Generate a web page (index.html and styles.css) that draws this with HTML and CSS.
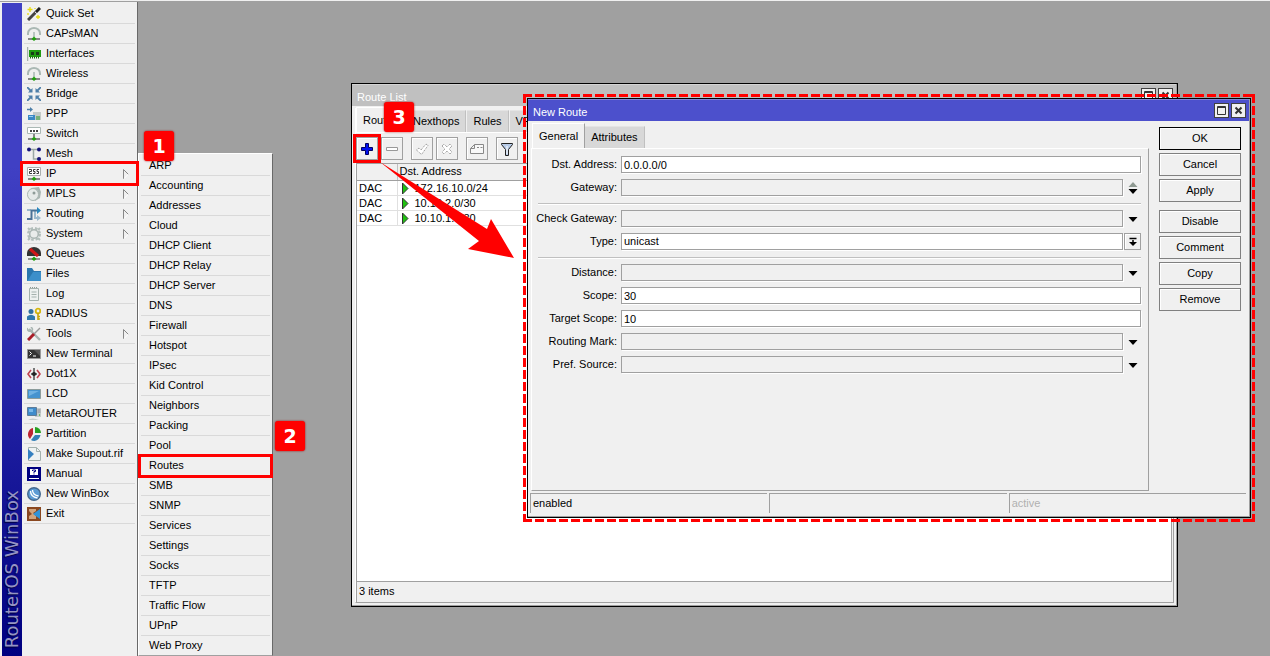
FILE: index.html
```html
<!DOCTYPE html>
<html lang="en">
<head>
<meta charset="utf-8">
<title>RouterOS WinBox</title>
<link rel="stylesheet" href="styles.css">
</head>
<body>
<div class="app">
  <div class="rail"><span class="rail-name">RouterOS WinBox</span></div>

  <nav class="menu" aria-label="Main menu">
    <button class="item"><svg class="icon" viewBox="0 0 14 14"><path d="M1 13 9 5" stroke="#444" stroke-width="3"/><path d="M9 5l4-4" stroke="#222" stroke-width="3"/><path d="M8 5l2 2" stroke="#ddd"/><path d="M3 0v5M.5 2.500h5M8 1v1M11 8v4M9 10h4M1 6v2" stroke="#e8dc10" stroke-width="1.300"/></svg>Quick Set</button>
    <button class="item"><svg class="icon" viewBox="0 0 14 14"><path d="M1 8V6.500a6 5.500 0 0 1 12 0V8" fill="none" stroke="#aab8b4" stroke-width="2"/><path d="M7 5v5" stroke="#aab8b4" stroke-width="1.500"/><path d="M1 12h12" stroke="#666" stroke-width="1.500"/><path d="M7 9.500 9.500 12 7 14l-2.500-2z" fill="#22a010"/></svg>CAPsMAN</button>
    <button class="item"><svg class="icon" viewBox="0 0 14 14"><path d="M.5 0v14" stroke="#a5b0ac" stroke-width="1.500"/><path d="M2 3h12v7H2z" fill="#1f9a10"/><path d="M4 5h3v3H4zM9 5h3v3H9z" fill="#173c17"/><path d="M3 10.500h10" stroke="#166c0c" stroke-dasharray="1 1" stroke-width="2"/></svg>Interfaces</button>
    <button class="item"><svg class="icon" viewBox="0 0 14 14"><path d="M1 8V6.500a6 5.500 0 0 1 12 0V8" fill="none" stroke="#aab8b4" stroke-width="2"/><path d="M7 5v5" stroke="#aab8b4" stroke-width="1.500"/><path d="M1 12h12" stroke="#666" stroke-width="1.500"/><path d="M7 9.500 9.500 12 7 14l-2.500-2z" fill="#22a010"/></svg>Wireless</button>
    <button class="item"><svg class="icon" viewBox="0 0 14 14"><path d="M0 0l4 4M14 0l-4 4M0 14l4-4M14 14l-4-4" stroke="#4e7fa8" stroke-width="1.800"/><path d="M5.500 1v4.500H1zM8.500 1v4.500H13zM5.500 13V8.500H1zM8.500 13V8.500H13z" fill="#4e7fa8"/></svg>Bridge</button>
    <button class="item"><svg class="icon" viewBox="0 0 14 14"><path d="M0 2.500h4" stroke="#4e7fa8" stroke-width="1.500"/><path d="M3 0l3 2.500L3 5z" fill="#4e7fa8"/><path d="M6 5h8v8H8V8H6z" fill="#c3cac8"/><path d="M1 8h7v5H1z" fill="#3c88c4"/><path d="M2 9.500h4" stroke="#9bd0f4"/><path d="M9 10h4M9 12h4" stroke="#29982a" stroke-width="1.200"/></svg>PPP</button>
    <button class="item"><svg class="icon" viewBox="0 0 14 14"><path d="M.5.500h13v6H.5z" fill="#fff" stroke="#aab8b4"/><path d="M3 3h2v2H3zM6 3h2v2H6zM9 3h2v2H9z" fill="#444"/><path d="M7 7v3" stroke="#888" stroke-width="2"/><path d="M1 12h12" stroke="#666" stroke-width="1.500"/><path d="M7 9.500 9.500 12 7 14l-2.500-2z" fill="#22a010"/></svg>Switch</button>
    <button class="item"><svg class="icon" viewBox="0 0 14 14"><path d="M2 2.500h9M6.500 2.500V12H11" fill="none" stroke="#9aa8a4" stroke-width="1.500"/><circle cx="2" cy="2.500" r="2" fill="#15157a"/><circle cx="12" cy="2.500" r="2" fill="#15157a"/><circle cx="12" cy="12" r="2" fill="#15157a"/></svg>Mesh</button>
    <button class="item"><svg class="icon" viewBox="0 0 14 14"><path d="M.5.500h13v8H.5z" fill="#fff" stroke="#aab0ae"/><path d="M2 2.500h2.500v2h-2v2H5M8.500 2.500H6.500v2h1.500v2H6M12 2.500h-2v2h1.500v2H9.500" fill="none" stroke="#222" stroke-width=".9"/><path d="M1 12h12" stroke="#666" stroke-width="1.500"/><path d="M7 9.500 9.500 12 7 14l-2.500-2z" fill="#22a010"/></svg>IP<svg class="more" viewBox="0 0 6 10"><path d="M.5 10V.5L5.500 5.500" fill="none" stroke="#888"/><path d="M5.500 5 1 9.500" stroke="#fff"/></svg></button>
    <button class="item"><svg class="icon" viewBox="0 0 14 14"><path d="M4 1l8-1 2 5-1 6-5 3z" fill="#a9b6b2"/><ellipse cx="6" cy="7.500" rx="5.500" ry="6" fill="#e5eae8" stroke="#a9b6b2"/><circle cx="7" cy="6" r="1.500" fill="#8e9c98"/></svg>MPLS<svg class="more" viewBox="0 0 6 10"><path d="M.5 10V.5L5.500 5.500" fill="none" stroke="#888"/><path d="M5.500 5 1 9.500" stroke="#fff"/></svg></button>
    <button class="item"><svg class="icon" viewBox="0 0 14 14"><path d="M0 3h4M8 3v8h3" fill="none" stroke="#9ab8cc" stroke-width="2"/><path d="M0 12h4.500V3.500h6" fill="none" stroke="#4a7196" stroke-width="2"/><path d="M10 0l4 3.500L10 7z" fill="#2886bd"/><path d="M10 8l4 3-4 3z" fill="#9ab8cc"/></svg>Routing<svg class="more" viewBox="0 0 6 10"><path d="M.5 10V.5L5.500 5.500" fill="none" stroke="#888"/><path d="M5.500 5 1 9.500" stroke="#fff"/></svg></button>
    <button class="item"><svg class="icon" viewBox="0 0 14 14"><circle cx="7" cy="7" r="5.800" fill="none" stroke="#b2bebb" stroke-width="2.400" stroke-dasharray="2.600 2"/><circle cx="7" cy="7" r="4.300" fill="#e9eceb" stroke="#a9b5b2" stroke-width="1.500"/><path d="M1 1l2 2M13 1l-2 2M1 13l2-2M13 13l-2-2" stroke="#b2bebb" stroke-width="2"/></svg>System<svg class="more" viewBox="0 0 6 10"><path d="M.5 10V.5L5.500 5.500" fill="none" stroke="#888"/><path d="M5.500 5 1 9.500" stroke="#fff"/></svg></button>
    <button class="item"><svg class="icon" viewBox="0 0 14 14"><path d="M0 9V6a7 6 0 0 1 14 0v3z" fill="#333"/><path d="M3 2l8 7" stroke="#d01818" stroke-width="3"/><path d="M1 12h12" stroke="#777" stroke-width="1.500"/><path d="M7 9.500 9.500 12 7 14l-2.500-2z" fill="#22a010"/></svg>Queues</button>
    <button class="item"><svg class="icon" viewBox="0 0 14 14"><path d="M0 1h5l2 3h7v10H0z" fill="#2a76ae"/><path d="M1 13 6 5h8v9H0z" fill="#3c8fca"/></svg>Files</button>
    <button class="item"><svg class="icon" viewBox="0 0 14 14"><path d="M2.500 1.500h9v12h-9z" fill="#edf1f0" stroke="#a4b1ad"/><path d="M4.500 5h5M4.500 7.500h5M4.500 10h5" stroke="#a4b1ad" stroke-width="1.200"/><path d="M3 .500h8" stroke="#8f9c98" stroke-dasharray="1 1"/></svg>Log</button>
    <button class="item"><svg class="icon" viewBox="0 0 14 14"><circle cx="4" cy="4.500" r="2.500" fill="#2f6f9f"/><path d="M0 13V9.500Q4 6 8 9.500V13z" fill="#2f78ad"/><circle cx="11" cy="4" r="2.300" fill="none" stroke="#d5b60e" stroke-width="1.800"/><path d="M11 6v7M11 9.500h2M11 12h2" stroke="#c4a50c" stroke-width="1.600"/></svg>RADIUS</button>
    <button class="item"><svg class="icon" viewBox="0 0 14 14"><path d="M2 2l11 11" stroke="#a9b5b2" stroke-width="2.400"/><path d="M0 1q1 4 4 3T4 0" fill="none" stroke="#a9b5b2" stroke-width="1.600"/><path d="M13 1 7 7" stroke="#999" stroke-width="1.500"/><path d="M7 7l-6 6" stroke="#a81c28" stroke-width="3"/></svg>Tools<svg class="more" viewBox="0 0 6 10"><path d="M.5 10V.5L5.500 5.500" fill="none" stroke="#888"/><path d="M5.500 5 1 9.500" stroke="#fff"/></svg></button>
    <button class="item"><svg class="icon" viewBox="0 0 14 14"><path d="M.5 2.500h13v9H.5z" fill="#333" stroke="#999"/><path d="M2.500 4.500l2 2-2 2M6 9h3" fill="none" stroke="#fff"/><path d="M13 3v6L7 3z" fill="#555"/></svg>New Terminal</button>
    <button class="item"><svg class="icon" viewBox="0 0 14 14"><path d="M4 3 1 7l3 4M10 3l3 4-3 4" fill="none" stroke="#c04450" stroke-width="1.600"/><path d="M7 1v12M4 7h6" stroke="#444" stroke-width="1.400"/><circle cx="7" cy="7" r="2" fill="#222"/></svg>Dot1X</button>
    <button class="item"><svg class="icon" viewBox="0 0 14 14"><path d="M.5 2.500h13v9H.5z" fill="#4593cf" stroke="#8c9c9b"/><path d="M2 4h10L2 9z" fill="#6fb1e2"/></svg>LCD</button>
    <button class="item"><svg class="icon" viewBox="0 0 14 14"><path d="M8 1h6v9H8z" fill="#c4ccca"/><path d="M.5.500h9v8h-9z" fill="#3f8ccb" stroke="#5e7c98"/><path d="M2 2h4v3H2z" fill="#78b8e8"/><path d="M10.500 3h3M10.500 5h3" stroke="#889"/><path d="M1 13q4-3 11 0z" fill="#c4ccca"/><path d="M12 8h1" stroke="#22a010"/></svg>MetaROUTER</button>
    <button class="item"><svg class="icon" viewBox="0 0 14 14"><path d="M6 1v6l-3 5A6.500 6.500 0 0 1 6 1z" fill="#bd2432"/><path d="M8 0a6 6 0 0 1 6 6H8z" fill="#27a022"/><path d="M13.500 8q-1 5-6 6Q5 14 4 13l4-5z" fill="#3480b8"/></svg>Partition</button>
    <button class="item"><svg class="icon" viewBox="0 0 14 14"><path d="M1.500.500h8l4 4v9h-12z" fill="#eef2f2" stroke="#a4b1ad"/><path d="M9.500.500v4h4" fill="none" stroke="#a4b1ad"/><path d="M1 2l6 5-6 6z" fill="#3480c0"/></svg>Make Supout.rif</button>
    <button class="item"><svg class="icon" viewBox="0 0 14 14"><path d="M0 0h14v14H0z" fill="#000080"/><path d="M3 2h8v6H3z" fill="#fff"/><path d="M5.500 4V3h3v1.500H7V6M7 6.500v1" fill="none" stroke="#000080"/><path d="M2 11.500h10" stroke="#fff"/></svg>Manual</button>
    <button class="item"><svg class="icon" viewBox="0 0 14 14"><circle cx="7" cy="7" r="6.300" fill="#5c9bd4" stroke="#44698f" stroke-width="1.400"/><path d="M3.500 4q0 6 7 7M5.500 3q0 5 6 6" fill="none" stroke="#fff" stroke-width="1.300"/></svg>New WinBox</button>
    <button class="item"><svg class="icon" viewBox="0 0 14 14"><path d="M0 0h14v14H0z" fill="#8a4820"/><path d="M2 2h7v2l-3 2 3 3v3H2V9l3-2-3-3z" fill="#d2a47c"/><path d="M13 2v10L6 7z" fill="#3194d8"/></svg>Exit</button>
  </nav>

  <main class="desk">
    <section class="window route-list" aria-label="Route List">
      <header class="title muted">
        <h2>Route List</h2>
        <button class="win-btn" aria-label="Maximize"><svg viewBox="0 0 11 11"><path d="M1.500 1.500h8v8h-8zM1 2.500h9" fill="none" stroke="#333"/></svg></button>
        <button class="win-btn" aria-label="Close"><svg viewBox="0 0 11 11"><path d="M2.500 2.500l6 6M8.500 2.500l-6 6" stroke="#333" stroke-width="2"/></svg></button>
      </header>
      <div class="frame">
        <div class="tabs list-tabs">
          <button class="tab active">Routes</button><button class="tab">Nexthops</button><button class="tab">Rules</button><button class="tab">VRF</button>
        </div>
        <div class="toolbar">
          <button class="tool" aria-label="Add"><svg viewBox="0 0 14 14"><path d="M5.500 1.500h3v4h4v3h-4v4h-3v-4h-4v-3h4z" fill="#0010f0" stroke="#000060"/></svg></button>
          <button class="tool" aria-label="Remove"><svg viewBox="0 0 14 14"><path d="M1.500 5.500h11v3h-11z" fill="#fff" stroke="#999"/></svg></button>
          <button class="tool spaced" aria-label="Enable"><svg viewBox="0 0 14 14"><path d="M1.500 8 4 6l2 2 5-6 2 1.500-6.500 9z" fill="#fff" stroke="#888" stroke-dasharray="1 1"/></svg></button>
          <button class="tool" aria-label="Disable"><svg viewBox="0 0 14 14"><path d="M2 4l2-2 3 3 3-3 2 2-3 3 3 3-2 2-3-3-3 3-2-2 3-3z" fill="#fff" stroke="#888" stroke-dasharray="1 1"/></svg></button>
          <button class="tool spaced" aria-label="Comment"><svg viewBox="0 0 14 14"><path d="M4.500 2.500h9v9H.500v-5zM.500 6.500h4v-4" fill="#f8f8f8" stroke="#888"/><path d="M7 5.500h2M10.500 5.500h2" stroke="#888"/></svg></button>
          <button class="tool spaced" aria-label="Filter"><svg viewBox="0 0 14 14"><path d="M1.500 1.500h11v1l-4 5v6h-3v-6l-4-5z" fill="#b8cce8" stroke="#222"/><path d="M7 4v8" stroke="#fff"/></svg></button>
        </div>
        <div class="grid">
          <table>
            <thead><tr><th class="flag"></th><th>Dst. Address</th></tr></thead>
            <tbody>
              <tr><td>DAC</td><td><svg class="play" viewBox="0 0 7 11"><path d="M.5 0 6 5.500.500 11z" fill="#20c010" stroke="#333"/></svg>172.16.10.0/24</td></tr>
              <tr><td>DAC</td><td><svg class="play" viewBox="0 0 7 11"><path d="M.5 0 6 5.500.500 11z" fill="#20c010" stroke="#333"/></svg>10.10.2.0/30</td></tr>
              <tr><td>DAC</td><td><svg class="play" viewBox="0 0 7 11"><path d="M.5 0 6 5.500.500 11z" fill="#20c010" stroke="#333"/></svg>10.10.1.0/30</td></tr>
            </tbody>
          </table>
        </div>
        <footer class="count">3 items</footer>
      </div>
    </section>

    <section class="window new-route" aria-label="New Route">
      <header class="title">
        <h2>New Route</h2>
        <button class="win-btn" aria-label="Maximize"><svg viewBox="0 0 11 11"><path d="M1.500 1.500h8v8h-8zM1 2.500h9" fill="none" stroke="#333"/></svg></button>
        <button class="win-btn" aria-label="Close"><svg viewBox="0 0 11 11"><path d="M2.500 2.500l6 6M8.500 2.500l-6 6" stroke="#333" stroke-width="2"/></svg></button>
      </header>
      <div class="dialog">
        <div class="sheet">
          <div class="tabs">
            <button class="tab active">General</button><button class="tab">Attributes</button>
          </div>
          <form class="page">
            <div class="field"><label for="dst">Dst. Address:</label><input id="dst" value="0.0.0.0/0"></div>
            <div class="field"><label for="gw">Gateway:</label><input id="gw" class="off"><button type="button" class="drop" aria-label="Add or remove gateway"><svg viewBox="0 0 10 12"><path d="M5 0l4.500 5h-9z" fill="#8f9a92"/><path d="M.500 7h9L5 12z" fill="#000"/></svg></button></div>
            <hr>
            <div class="field"><label for="cg">Check Gateway:</label><input id="cg" class="off"><button type="button" class="drop" aria-label="Expand"><svg viewBox="0 0 10 12"><path d="M.500 4h9L5 9z" fill="#000"/></svg></button></div>
            <div class="field"><label for="type">Type:</label><select id="type"><option>unicast</option></select><button type="button" class="drop boxed" aria-label="Choose type"><svg viewBox="0 0 10 12"><path d="M1.500 2.500h7M5 4v3" stroke="#000" stroke-width="1.500"/><path d="M1 6h8l-4 4z" fill="#000"/></svg></button></div>
            <hr>
            <div class="field"><label for="dist">Distance:</label><input id="dist" class="off"><button type="button" class="drop" aria-label="Expand"><svg viewBox="0 0 10 12"><path d="M.500 4h9L5 9z" fill="#000"/></svg></button></div>
            <div class="field"><label for="scope">Scope:</label><input id="scope" value="30"></div>
            <div class="field"><label for="tscope">Target Scope:</label><input id="tscope" value="10"></div>
            <div class="field"><label for="mark">Routing Mark:</label><input id="mark" class="off"><button type="button" class="drop" aria-label="Expand"><svg viewBox="0 0 10 12"><path d="M.500 4h9L5 9z" fill="#000"/></svg></button></div>
            <div class="field"><label for="pref">Pref. Source:</label><input id="pref" class="off"><button type="button" class="drop" aria-label="Expand"><svg viewBox="0 0 10 12"><path d="M.500 4h9L5 9z" fill="#000"/></svg></button></div>
          </form>
        </div>
        <div class="actions">
          <button class="default">OK</button><button>Cancel</button><button>Apply</button>
          <button class="group">Disable</button><button>Comment</button><button>Copy</button><button>Remove</button>
        </div>
      </div>
      <footer class="status"><span>enabled</span><span></span><span class="dim">active</span></footer>
      <div class="dashes"></div>
    </section>
  </main>

  <nav class="submenu" aria-label="IP">
    <button class="item">ARP</button>
    <button class="item">Accounting</button>
    <button class="item">Addresses</button>
    <button class="item">Cloud</button>
    <button class="item">DHCP Client</button>
    <button class="item">DHCP Relay</button>
    <button class="item">DHCP Server</button>
    <button class="item">DNS</button>
    <button class="item">Firewall</button>
    <button class="item">Hotspot</button>
    <button class="item">IPsec</button>
    <button class="item">Kid Control</button>
    <button class="item">Neighbors</button>
    <button class="item">Packing</button>
    <button class="item">Pool</button>
    <button class="item">Routes</button>
    <button class="item">SMB</button>
    <button class="item">SNMP</button>
    <button class="item">Services</button>
    <button class="item">Settings</button>
    <button class="item">Socks</button>
    <button class="item">TFTP</button>
    <button class="item">Traffic Flow</button>
    <button class="item">UPnP</button>
    <button class="item">Web Proxy</button>
  </nav>

  <div class="ring ring-ip"></div>
  <div class="ring ring-routes"></div>
  <div class="ring ring-add"></div>
  <svg class="pointer" viewBox="0 0 134 97"><path d="M0 0 107 67l4-10 23 39-46-9 11-8z" fill="#f00"/></svg>
  <div class="badge badge-1">1</div>
  <div class="badge badge-2">2</div>
  <div class="badge badge-3">3</div>
</div>
</body>
</html>
```
FILE: styles.css
```css
* { box-sizing: border-box; }

body {
  margin: 0;
  font: 11px/15px "Liberation Sans", Arial, sans-serif;
  color: #000;
  background: #f0f0f0;
}

button, input, select {
  font: inherit;
  color: inherit;
  margin: 0;
  padding: 0;
  border: 0;
  border-radius: 0;
  background: none;
}

svg { display: block; }

.app {
  position: relative;
  display: flex;
  height: 100vh;
  overflow: hidden;
  padding-left: 2px;
  border-top: 1px solid #f0f0f0;
}

.app::before {
  content: "";
  position: absolute;
  inset: 0 0 auto;
  height: 1px;
  background: #a0a0a0;
}

/* left rail */
.rail {
  width: 20px;
  flex: none;
  margin-top: 2px;
  padding-bottom: 8px;
  display: flex;
  align-items: flex-end;
  background: linear-gradient(#4040c4, #4040c4 25%, #000080);
}

.rail-name {
  writing-mode: vertical-rl;
  transform: rotate(180deg);
  font: 18px/20px "DejaVu Sans", sans-serif;
  white-space: nowrap;
  color: #9494c4;
  text-shadow: -1px -1px 1px #00003c;
}

/* menus */
.menu {
  width: 116px;
  flex: none;
  padding: 3px 2px 0;
  border-right: 1px solid #696969;
}

.item {
  display: flex;
  align-items: center;
  gap: 5px;
  width: 100%;
  height: 20px;
  padding-left: 3px;
  border-bottom: 1px solid #d9d9d9;
  text-align: left;
  white-space: nowrap;
}

.icon { width: 14px; height: 14px; flex: none; }
.more { width: 6px; height: 10px; margin: 0 6px 0 auto; }

.submenu {
  position: absolute;
  left: 138px;
  top: 152px;
  width: 135px;
  padding: 2px 2px 0;
  background: #f0f0f0;
  border: 1px solid #fff;
  border-right: 1px solid #696969;
  border-bottom: 1px solid #a0a0a0;
}

.submenu .item { padding-left: 8px; }
.submenu .item:last-child { height: 19px; border-bottom: 0; }

/* desktop and windows */
.desk {
  flex: 1;
  position: relative;
  margin-top: 1px;
  background: #a0a0a0;
}

.window {
  position: absolute;
  display: flex;
  flex-direction: column;
  background: #f0f0f0;
  border: 1px solid #000;
  box-shadow: inset -1px -1px #a0a0a0;
}

.route-list { left: 213px; top: 81px; right: 92px; bottom: 49px; }
.new-route { left: 389px; top: 96px; right: 19px; bottom: 138px; }

.title {
  display: flex;
  align-items: center;
  gap: 2px;
  height: 22px;
  padding: 0 3px 0 5px;
  margin-right: 1px;
  color: #fff;
  background: #4c50cc;
  border-top: 1px solid #8484d8;
}

.title.muted { background: #c0c0c0; border-top-color: #d4d4d4; }
.title h2 { flex: 1; margin: 0; padding-top: 3px; font-size: inherit; font-weight: normal; }

.win-btn {
  width: 15px;
  height: 15px;
  padding: 1px;
  background: #f0f0f0;
  border: 1px solid #404040;
}

.win-btn svg { width: 11px; height: 11px; }

.tabs { display: flex; align-items: flex-end; height: 25px; }

.tab {
  height: 22px;
  padding: 0 6px;
  background: #d8d8d8;
  border-right: 1px solid #c0c0c0;
  border-top: 1px solid #e4e4e4;
}

.tab.active {
  height: 25px;
  padding: 0 6px;
  background: #f0f0f0;
  border: 1px solid #fff;
  border-right-color: #a0a0a0;
  border-bottom: 0;
}

/* route list */
.frame {
  flex: 1;
  display: flex;
  flex-direction: column;
  margin: 2px 3px 3px;
  padding: 0 1px 0 0;
  border-right: 1px solid #a0a0a0;
  border-bottom: 1px solid #a0a0a0;
  border-left: 1px solid #fff;
}

.list-tabs { height: 24px; gap: 1px; }
.list-tabs .tab.active { width: 50px; text-align: left; }

.toolbar {
  display: flex;
  gap: 3px;
  padding: 4px 0 3px;
  border-top: 1px solid #fff;
}

.tool {
  display: grid;
  place-items: center;
  width: 22px;
  height: 23px;
  border: 1px solid #a0a0a0;
  box-shadow: inset 1px 1px #fff;
}

.tool svg { width: 14px; height: 14px; }
.tool.spaced { margin-left: 5px; }

.grid {
  flex: 1;
  background: #fff;
  border: 1px solid #a0a0a0;
}

table { width: 100%; border-collapse: collapse; table-layout: fixed; }

th {
  height: 16px;
  padding: 0 2px;
  font-weight: normal;
  text-align: left;
  background: #f0f0f0;
  border-bottom: 1px solid #a0a0a0;
}

th.flag { width: 40px; border-right: 1px solid #c0c0c0; }

td {
  height: 15px;
  padding: 0 2px;
  line-height: 14px;
  border-bottom: 1px solid #e0e0e0;
}

td + td { border-left: 1px solid #e0e0e0; padding-left: 4px; }

.play { display: inline-block; width: 7px; height: 11px; margin-right: 6px; vertical-align: -2px; }

.count {
  height: 20px;
  padding: 2px 2px 0;
  border-left: 1px solid #a0a0a0;
}

/* new route dialog */
.dialog { flex: 1; display: flex; gap: 10px; padding: 2px 9px 0 3px; }
.sheet { flex: 1; display: flex; flex-direction: column; }
.sheet .tabs { padding-left: 1px; }

.page {
  flex: 1;
  padding: 7px 7px 0 6px;
  border: 1px solid #fff;
  border-right-color: #a0a0a0;
  border-bottom-color: #a0a0a0;
}

.field { display: flex; align-items: center; height: 17px; margin-bottom: 6px; }
.field label { display: flex; justify-content: flex-end; width: 79px; margin-right: 4px; white-space: nowrap; }

.field input, .field select {
  flex: 1;
  min-width: 0;
  height: 17px;
  padding: 0 2px;
  appearance: none;
  background: #fff;
  border: 1px solid #a0a0a0;
  box-shadow: 1px 1px #fff;
}

.field input.off { background: #f0f0f0; }

.drop {
  display: grid;
  place-items: center;
  width: 17px;
  height: 17px;
  margin-left: 1px;
}

.drop svg { width: 10px; height: 12px; }
.drop.boxed { border: 1px solid #a0a0a0; box-shadow: inset 1px 1px #fff; }

hr { height: 2px; margin: 7px 0 5px; border: 0; border-top: 1px solid #c0c0c0; border-bottom: 1px solid #fff; }

.actions { width: 82px; padding-top: 4px; display: flex; flex-direction: column; gap: 3px; }
.actions button { height: 23px; border: 1px solid #808080; box-shadow: inset 1px 1px #fff; }
.actions .default { border-color: #000; }
.actions .group { margin-top: 5px; }

.status { display: flex; gap: 2px; padding: 2px 4px 4px 2px; }

.status span {
  flex: 1;
  height: 20px;
  padding: 2px;
  border-top: 1px solid #a0a0a0;
  border-left: 1px solid #a0a0a0;
}

.dim { color: #b0b0b0; }

.dashes {
  position: absolute;
  inset: -5px;
  pointer-events: none;
  background:
    repeating-linear-gradient(90deg, #f00 0 9px, transparent 9px 12px) top / 100% 3px no-repeat,
    repeating-linear-gradient(90deg, #f00 0 9px, transparent 9px 12px) bottom / 100% 3px no-repeat,
    repeating-linear-gradient(#f00 0 9px, transparent 9px 12px) left / 3px 100% no-repeat,
    repeating-linear-gradient(#f00 0 9px, transparent 9px 12px) right / 3px 100% no-repeat;
}

/* step callouts */
.ring { position: absolute; border: 3px solid #f00; pointer-events: none; }
.ring-ip { left: 20px; top: 160px; width: 119px; height: 25px; }
.ring-routes { left: 138px; top: 453px; width: 135px; height: 24px; }
.ring-add { left: 353px; top: 133px; width: 28px; height: 29px; }

.pointer { position: absolute; left: 380px; top: 161px; width: 134px; height: 97px; }

.badge {
  position: absolute;
  width: 30px;
  height: 30px;
  border-radius: 3px;
  background: #f00;
  color: #fff;
  font: bold 19px/30px "DejaVu Sans", sans-serif;
  text-align: center;
  box-shadow: 0 0 2px #a00000;
}

.badge-1 { left: 144px; top: 130px; }
.badge-2 { left: 275px; top: 420px; }
.badge-3 { left: 384px; top: 101px; }
```
